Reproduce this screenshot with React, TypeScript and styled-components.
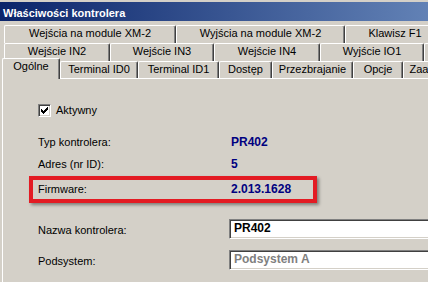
import React from 'react';
import styled, { createGlobalStyle } from 'styled-components';

const GlobalStyle = createGlobalStyle`
  html, body {
    margin: 0;
    padding: 0;
    background: #d4d0c8;
    overflow: hidden;
  }
  body {
    font-family: "Liberation Sans", Arial, sans-serif;
    font-size: 11px;
    color: #000;
  }
`;

const Window = styled.div`
  width: 460px;
  height: 282px;
  padding-top: 2px;
  box-sizing: border-box;
  display: flex;
  flex-direction: column;
  background: #d4d0c8;
  overflow: hidden;
`;

const TitleBar = styled.div`
  height: 19px;
  box-sizing: border-box;
  padding: 3px 0 0 3px;
  line-height: 16px;
  font-weight: bold;
  color: #fff;
  white-space: nowrap;
  background: linear-gradient(to right, #0a246a 0px, #a6caf0 760px);
`;

const TabStrip = styled.div`
  margin-top: 4px;
  display: flex;
  flex-direction: column;
`;

const TabRow = styled.div<{ $indent: number; $h: number }>`
  display: flex;
  height: ${p => p.$h}px;
  padding-left: ${p => p.$indent}px;
`;

const Tab = styled.div<{ $w: number; $active?: boolean }>`
  flex: none;
  position: relative;
  z-index: ${p => (p.$active ? 1 : 0)};
  box-sizing: border-box;
  width: ${p => p.$w}px;
  height: ${p => (p.$active ? '21px' : '100%')};
  margin-top: ${p => (p.$active ? '-3px' : '0')};
  line-height: 15px;
  text-align: center;
  white-space: nowrap;
  overflow: hidden;
  background: #d4d0c8;
  border-top: 1px solid #fff;
  border-left: 1px solid #fff;
  border-right: 1px solid #404040;
  border-radius: 2px 2px 0 0;
  box-shadow: inset -1px 0 0 #808080;
`;

const Panel = styled.div`
  flex: 1;
  margin-left: 2px;
  padding: 25px 0 0 35px;
  display: flex;
  flex-direction: column;
  border-top: 1px solid #fff;
  border-left: 1px solid #fff;
`;

const CheckRow = styled.label`
  display: flex;
  align-items: center;
  gap: 5px;
  height: 13px;
`;

const CheckBox = styled.span`
  width: 13px;
  height: 13px;
  box-sizing: border-box;
  display: flex;
  align-items: center;
  justify-content: center;
  background: #fff;
  border-top: 1px solid #808080;
  border-left: 1px solid #808080;
  border-bottom: 1px solid #fff;
  border-right: 1px solid #fff;
  box-shadow: inset 1px 1px 0 #404040, inset -1px -1px 0 #d4d0c8;
`;

const CheckText = styled.span`
  line-height: 11px;
`;

const InfoRow = styled.div<{ $h: number; $top?: number }>`
  display: flex;
  height: ${p => p.$h}px;
  line-height: ${p => p.$h}px;
  margin-top: ${p => p.$top ?? 0}px;
`;

const HighlightRow = styled(InfoRow)`
  position: relative;

  &::after {
    content: '';
    position: absolute;
    left: -9px;
    top: 1px;
    width: 288px;
    height: 27px;
    box-sizing: border-box;
    border: 4px solid #e31b23;
    box-shadow: 2px 2px 3px rgba(0, 0, 0, 0.4);
    pointer-events: none;
  }
`;

const Label = styled.span`
  flex: none;
  width: 193px;
`;

const Value = styled.span`
  font-size: 12px;
  font-weight: bold;
  color: #000080;
`;

const EditRow = styled.div<{ $top: number }>`
  display: flex;
  align-items: flex-start;
  height: 20px;
  margin-top: ${p => p.$top}px;
`;

const EditLabel = styled.span`
  flex: none;
  width: 191px;
  padding-top: 5px;
  line-height: 13px;
`;

const EditBox = styled.div<{ $disabled?: boolean }>`
  flex: 1;
  height: 20px;
  box-sizing: border-box;
  padding: 1px 0 3px 4px;
  line-height: 14px;
  font-size: 12px;
  font-weight: bold;
  white-space: nowrap;
  color: ${p => (p.$disabled ? '#808080' : '#000')};
  background: #fff;
  border-top: 1px solid #808080;
  border-left: 1px solid #808080;
  border-bottom: 1px solid #fff;
  border-right: 1px solid #fff;
  box-shadow: inset 1px 1px 0 #404040, inset -1px -1px 0 #d4d0c8;
`;

const topRow = [
  { t: 'Wejścia na module XM-2', w: 172 },
  { t: 'Wyjścia na module XM-2', w: 169 },
  { t: 'Klawisz F1', w: 100 },
];

const midRow = [
  { t: 'Wejście IN2', w: 106 },
  { t: 'Wejście IN3', w: 104 },
  { t: 'Wejście IN4', w: 106 },
  { t: 'Wyjście IO1', w: 104 },
  { t: 'Wyjście IO2', w: 140 },
];

const frontRow = [
  { t: 'Ogólne', w: 58 },
  { t: 'Terminal ID0', w: 78 },
  { t: 'Terminal ID1', w: 81 },
  { t: 'Dostęp', w: 53 },
  { t: 'Przezbrajanie', w: 81 },
  { t: 'Opcje', w: 50 },
  { t: 'Zaawansowane', w: 90 },
];

const checkTops = [2, 3, 4, 3, 2, 1, 0];

function CheckMark() {
  return (
    <svg width="7" height="7" viewBox="0 0 7 7" shapeRendering="crispEdges">
      {checkTops.map((y, x) => (
        <rect key={x} x={x} y={y} width="1" height="3" fill="#000" />
      ))}
    </svg>
  );
}

export default function App() {
  return (
    <>
      <GlobalStyle />
      <Window>
        <TitleBar>Właściwości kontrolera</TitleBar>
        <TabStrip>
          <TabRow $indent={4} $h={18}>
            {topRow.map(tab => (
              <Tab key={tab.t} $w={tab.w}>{tab.t}</Tab>
            ))}
          </TabRow>
          <TabRow $indent={4} $h={18}>
            {midRow.map(tab => (
              <Tab key={tab.t} $w={tab.w}>{tab.t}</Tab>
            ))}
          </TabRow>
          <TabRow $indent={2} $h={17}>
            {frontRow.map((tab, i) => (
              <Tab key={tab.t} $w={tab.w} $active={i === 0}>{tab.t}</Tab>
            ))}
          </TabRow>
        </TabStrip>
        <Panel>
          <CheckRow>
            <CheckBox>
              <CheckMark />
            </CheckBox>
            <CheckText>Aktywny</CheckText>
          </CheckRow>
          <InfoRow $h={22} $top={14}>
            <Label>Typ kontrolera:</Label>
            <Value>PR402</Value>
          </InfoRow>
          <InfoRow $h={22}>
            <Label>Adres (nr ID):</Label>
            <Value>5</Value>
          </InfoRow>
          <HighlightRow $h={28}>
            <Label>Firmware:</Label>
            <Value>2.013.1628</Value>
          </HighlightRow>
          <EditRow $top={16}>
            <EditLabel>Nazwa kontrolera:</EditLabel>
            <EditBox>PR402</EditBox>
          </EditRow>
          <EditRow $top={11}>
            <EditLabel>Podsystem:</EditLabel>
            <EditBox $disabled>Podsystem A</EditBox>
          </EditRow>
        </Panel>
      </Window>
    </>
  );
}
